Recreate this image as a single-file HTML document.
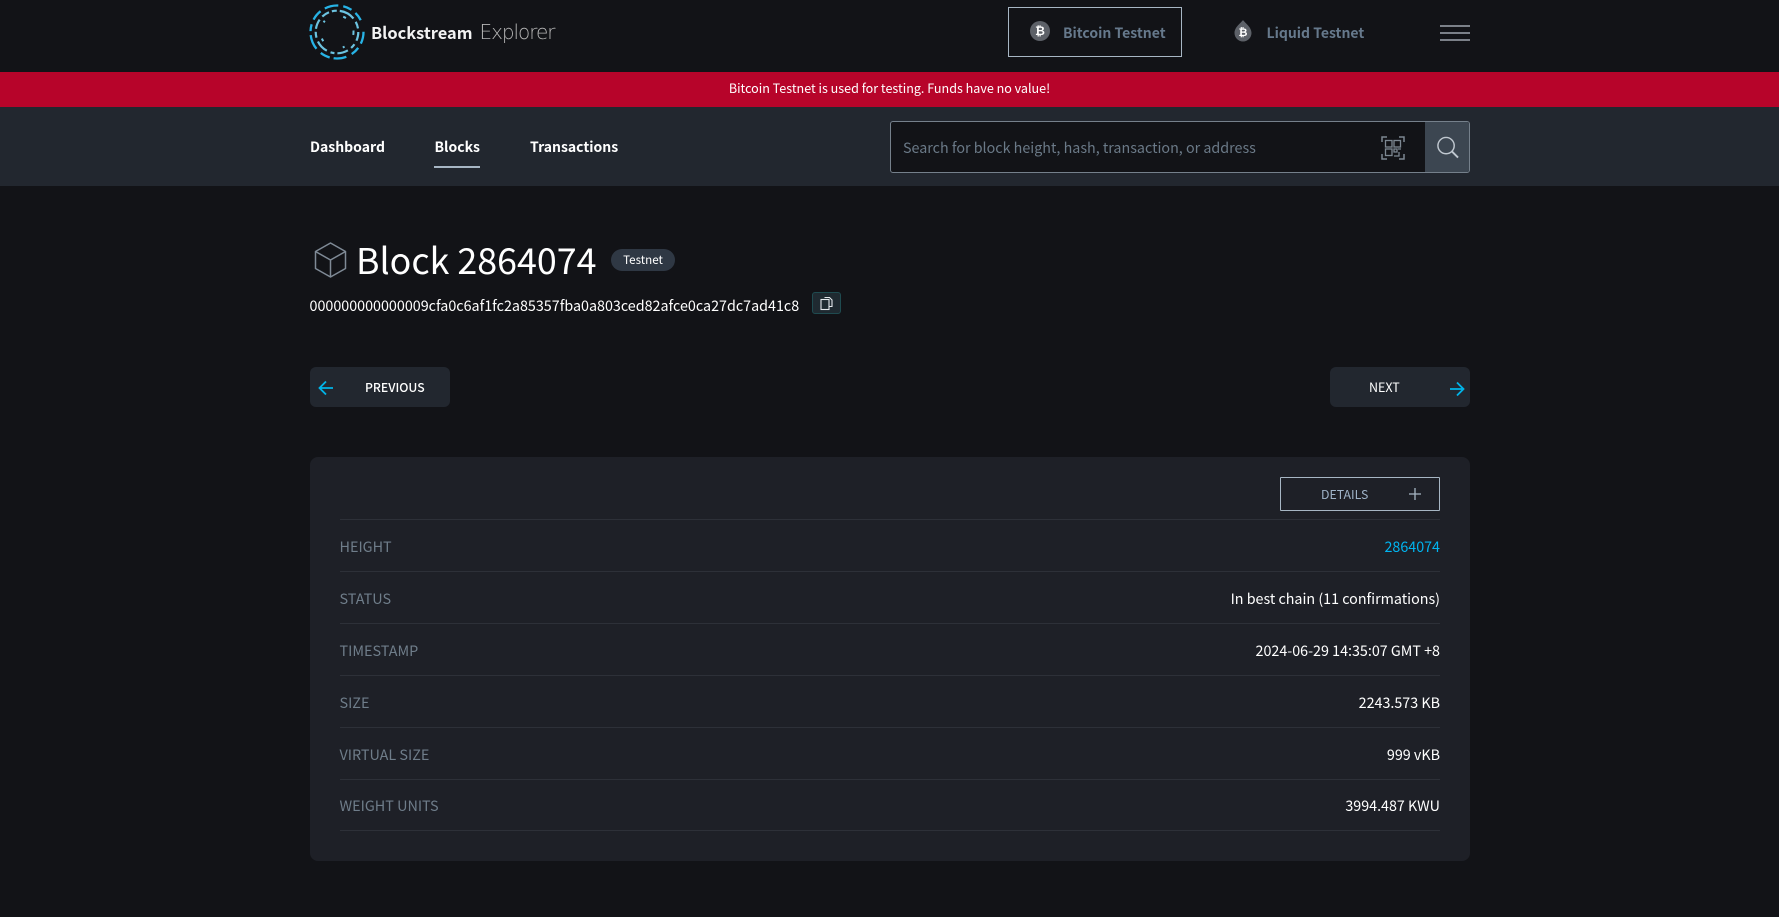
<!DOCTYPE html>
<html lang="en"><head><meta charset="utf-8"><title>Block 2864074</title>
<style>
html,body{margin:0;padding:0;background:#121317;}
body{width:1779px;height:917px;position:relative;overflow:hidden;font-family:"Noto Sans CJK JP","Liberation Sans",sans-serif;color:#fff;font-size:14px;}
.a{position:absolute;white-space:nowrap;line-height:20px;}
.box{position:absolute;box-sizing:border-box;}
.line{position:absolute;left:340px;width:1100px;height:1px;background:#2d3038;}
.k{left:339.500px;color:#6f7d8a;font-size:14.400px;}
.v{right:339px;color:#fff;font-size:14.300px;text-align:right;}
svg{position:absolute;overflow:visible;}
</style></head><body>
<div class="box" style="left:0;top:72px;width:1779px;height:35px;background:#b7042a"></div>
<div class="box" style="left:0;top:107px;width:1779px;height:79px;background:#22272f"></div>

<svg style="left:305px;top:0" width="75" height="65" viewBox="0 0 75 65" fill="none">
<circle cx="32" cy="32" r="26.500" stroke="#27b3e6" stroke-width="2.300" stroke-dasharray="12 5 9 6 13 4 10 6 15 4 7 5 11 5 14 5 9 5 9 12"/>
<circle cx="32" cy="32" r="21.300" stroke="#6cc3e0" stroke-width="2.200" stroke-dasharray="9 4 5 4 11 3 4 4 13 4 6 3 10 4 8 3 5 3 16 4 7 5"/>
<circle cx="32" cy="32" r="16.500" stroke="#6cc3e0" stroke-width="2" stroke-dasharray="3 15 2 22 3 17 2 20"/>
</svg>
<div class="a" style="left:371px;top:22px;font-size:16.400px;font-weight:700;color:#f3f3f3">Blockstream</div>
<div class="a" style="left:479.500px;top:22px;font-size:20px;color:#b5b5b5;font-family:'DejaVu Sans',sans-serif;font-weight:200;letter-spacing:-1.050px">Explorer</div>

<div class="box" style="left:1008px;top:7px;width:174px;height:50px;border:1px solid #a7b6c4"></div>
<svg style="left:1030px;top:21px" width="20" height="20"><circle cx="10" cy="10" r="10" fill="#5d6168"/></svg>
<div class="a" style="left:1030px;top:21px;width:20px;text-align:center;font-size:12px;font-weight:700;font-family:'DejaVu Sans',sans-serif">₿</div>
<div class="a" style="left:1063px;top:22.500px;font-size:14px;font-weight:700;color:#66798c">Bitcoin Testnet</div>
<svg style="left:1234px;top:20px" width="18" height="22" viewBox="0 0 18 22"><path d="M9 0C7 3 .5 7 .5 13a8.500 8.500 0 0 0 17 0C17.500 7 11 3 9 0Z" fill="#5d6168"/></svg>
<div class="a" style="left:1234px;top:23px;width:18px;text-align:center;font-size:11px;font-weight:700;font-family:'DejaVu Sans',sans-serif">₿</div>
<div class="a" style="left:1266.500px;top:22.500px;font-size:14px;font-weight:700;color:#66798c">Liquid Testnet</div>
<div class="box" style="left:1440px;top:25px;width:30px;height:2px;background:#7b8088"></div>
<div class="box" style="left:1440px;top:32px;width:30px;height:2px;background:#7b8088"></div>
<div class="box" style="left:1440px;top:39px;width:30px;height:2px;background:#7b8088"></div>

<div class="a" style="left:0;top:77.500px;width:1779px;text-align:center;font-size:12.550px;color:#fff">Bitcoin Testnet is used for testing. Funds have no value!</div>

<div class="a" style="left:310px;top:137px;font-size:14px;font-weight:700">Dashboard</div>
<div class="a" style="left:434.500px;top:137px;font-size:14px;font-weight:700">Blocks</div>
<div class="box" style="left:434px;top:166px;width:46px;height:2px;background:#a7b6c4"></div>
<div class="a" style="left:530px;top:137px;font-size:14px;font-weight:700">Transactions</div>

<div class="box" style="left:890px;top:121px;width:580px;height:52px;background:#121317;border:1px solid #75808b;border-radius:3px;overflow:hidden">
<div class="box" style="right:0;top:0;width:44px;height:50px;background:#3c4651"></div>
</div>
<div class="a" style="left:903px;top:138px;font-size:14.300px;color:#6b7a88">Search for block height, hash, transaction, or address</div>
<svg style="left:1381px;top:136px" width="24" height="24" viewBox="0 0 24 24" fill="none" stroke="#7d8892" stroke-width="1.300">
<path d="M1 6V1h5M23 6V1h-5M1 18v5h5M23 18v5h-5" stroke-width="1.500"/>
<rect x="4.500" y="4.500" width="6.500" height="6.500"/><rect x="13" y="4.500" width="6.500" height="6.500"/><rect x="4.500" y="13" width="6.500" height="6.500"/>
<path d="M13 13h3v3h-3zM17 13h3M18 16v4h-5"/>
</svg>
<svg style="left:1436px;top:136px" width="23" height="23" viewBox="0 0 24 24" fill="none" stroke="#c0c8d0" stroke-width="1.500">
<circle cx="10.500" cy="10" r="8.500"/><path d="M16.500 16l6.500 6.500" stroke-width="2"/>
</svg>

<svg style="left:313.500px;top:242px" width="33" height="36" viewBox="0 0 32 36" fill="none" stroke="#7f8a96" stroke-width="1.500" stroke-linejoin="round">
<path d="M16 1 31 9.500v17L16 35 1 26.500v-17Z"/><path d="M1 9.500 16 18 31 9.500M16 18v17"/>
</svg>
<div class="a" style="left:356px;top:234px;font-size:35.800px;line-height:50px;color:#fff">Block 2864074</div>
<div class="box" style="left:611px;top:249px;width:64px;height:22px;border-radius:11px;background:#2f3844"></div>
<div class="a" style="left:611px;top:250px;width:64px;text-align:center;font-size:11.600px;color:#fff">Testnet</div>
<div class="a" style="left:309.500px;top:296px;font-size:14.320px;color:#fff">000000000000009cfa0c6af1fc2a85357fba0a803ced82afce0ca27dc7ad41c8</div>
<div class="box" style="left:812px;top:292px;width:29px;height:22px;border-radius:3px;background:#1f2a31;border:1px solid #1f4b50"></div>
<svg style="left:820px;top:296px" width="13" height="14" viewBox="0 0 13 14" fill="none" stroke="#e4e8ec" stroke-width="1.100"><path d="M4.500 1.500h5l2.500 2.500v6.500H9.500"/><rect x="1" y="3.500" width="8" height="10"/></svg>

<div class="box" style="left:310px;top:367px;width:140px;height:40px;background:#22272f;border-radius:6px"></div>
<svg style="left:318px;top:380px" width="16" height="16" viewBox="0 0 16 16" fill="none" stroke="#00b4e8" stroke-width="1.800"><path d="M15 8H2M8 1.500 1.500 8 8 14.500"/></svg>
<div class="a" style="left:365px;top:377px;font-size:12.200px;font-weight:500;color:#fff">PREVIOUS</div>
<div class="box" style="left:1330px;top:367px;width:140px;height:40px;background:#22272f;border-radius:6px"></div>
<div class="a" style="left:1369px;top:377px;font-size:12.500px;color:#fff">NEXT</div>
<svg style="left:1449px;top:381px" width="16" height="16" viewBox="0 0 16 16" fill="none" stroke="#00b4e8" stroke-width="1.800"><path d="M1 8h13M8 1.500 14.500 8 8 14.500"/></svg>

<div class="box" style="left:310px;top:457px;width:1160px;height:404px;background:#1e2027;border-radius:8px"></div>
<div class="box" style="left:1280px;top:477px;width:160px;height:34px;border:1px solid #a7b6c4;border-radius:1px"></div>
<div class="a" style="left:1321px;top:484px;font-size:12.300px;color:#9fb3c8">DETAILS</div>
<svg style="left:1409px;top:488px" width="12" height="12" fill="none" stroke="#a7b6c4" stroke-width="1.300"><path d="M6 0v12M0 6h12"/></svg>

<div class="line" style="top:519px"></div>
<div class="line" style="top:571px"></div>
<div class="line" style="top:623px"></div>
<div class="line" style="top:675px"></div>
<div class="line" style="top:727px"></div>
<div class="line" style="top:779px"></div>
<div class="line" style="top:830px"></div>

<div class="a k" style="top:537px">HEIGHT</div><div class="a v" style="top:537px;color:#00b4f0">2864074</div>
<div class="a k" style="top:589px">STATUS</div><div class="a v" style="top:589px">In best chain (11 confirmations)</div>
<div class="a k" style="top:641px">TIMESTAMP</div><div class="a v" style="top:641px">2024-06-29 14:35:07 GMT +8</div>
<div class="a k" style="top:693px">SIZE</div><div class="a v" style="top:693px">2243.573 KB</div>
<div class="a k" style="top:745px">VIRTUAL SIZE</div><div class="a v" style="top:745px">999 vKB</div>
<div class="a k" style="top:796px">WEIGHT UNITS</div><div class="a v" style="top:796px">3994.487 KWU</div>
</body></html>
